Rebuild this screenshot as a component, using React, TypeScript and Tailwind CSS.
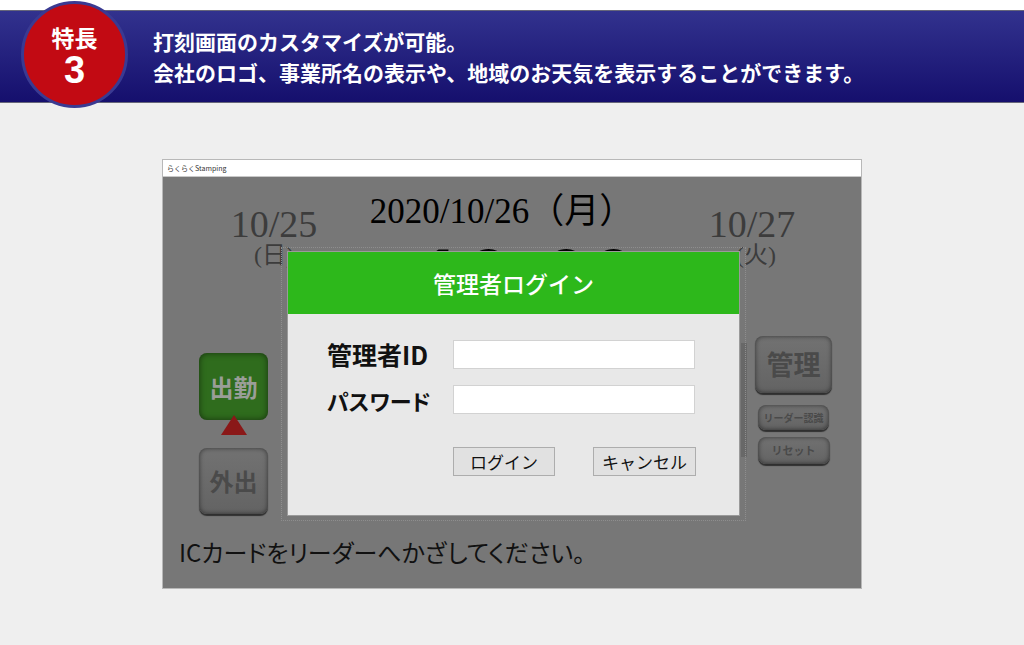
import React from "react";

function GreyButton({ className, children }: { className: string; children: React.ReactNode }) {
  return (
    <div
      className={
        "flex items-center justify-center rounded-[8px] bg-[linear-gradient(to_bottom,#727272,#636363)] shadow-[inset_0_0_5px_rgba(0,0,0,0.55),0_2px_1px_rgba(0,0,0,0.6)] text-[#4a4a4a] font-bold " +
        className
      }
    >
      {children}
    </div>
  );
}

export default function App() {
  return (
    <div className="relative w-[1024px] h-[645px] overflow-hidden bg-[#efefef] font-['Noto_Sans_CJK_JP',sans-serif]">
      <div className="h-[10px] bg-white" />
      <div className="h-[93px] border-y border-[#66667a] bg-[linear-gradient(to_bottom,#32328e,#150f6d)] flex flex-col justify-center pl-[153px] text-white font-bold text-[21px] leading-[31px]">
        <div>打刻画面のカスタマイズが可能。</div>
        <div>会社のロゴ、事業所名の表示や、地域のお天気を表示することができます。</div>
      </div>

      {/* badge */}
      <div className="absolute left-[21px] top-[1px] w-[107px] h-[107px] rounded-full bg-[#c20a13] border-[3px] border-[#3a3a92] flex flex-col items-center text-white font-bold">
        <div className="mt-[21px] text-[23px] leading-[24px]">特長</div>
        <div className="mt-[3px] text-[38px] leading-[36px] font-['Liberation_Sans',sans-serif]">3</div>
      </div>

      {/* window */}
      <div className="ml-[162px] mt-[56px] w-[700px] border border-[#b8b8b8] bg-white">
        <div className="h-[17px] border-b border-[#c8c8c8] flex items-center pl-[4px] text-[7px] text-[#333]">
          らくらくStamping
        </div>
        <div className="relative h-[411px] bg-[#777777] overflow-hidden">
          {/* date row */}
          <div className="flex items-start font-['Liberation_Serif','Noto_Sans_CJK_JP',serif]">
            <div className="ml-[68px] w-[86px] shrink-0 mt-[28px] flex flex-col items-center text-[#3c3c3c]">
              <div className="text-[38px] leading-none">10/25</div>
              <div className="text-[24px] leading-none">(日)</div>
            </div>
            <div className="ml-[45px] w-[280px] shrink-0 mt-[17px] flex flex-col items-center">
              <div className="text-[35px] leading-none text-black whitespace-nowrap">2020/10/26（月）</div>
              <div className="mt-[9px] pl-[56px] text-[76px] leading-none font-bold tracking-[5px] text-black whitespace-nowrap font-['Liberation_Sans',sans-serif]">
                10:00
              </div>
            </div>
            <div className="ml-[67px] w-[86px] shrink-0 mt-[28px] flex flex-col items-center text-[#3c3c3c]">
              <div className="text-[38px] leading-none">10/27</div>
              <div className="text-[24px] leading-none pl-[8px]">(火)</div>
            </div>
          </div>

          {/* buttons row */}
          <div className="flex justify-between items-start -mt-[8px] pl-[36px] pr-[29px]">
            <div className="mt-[47px] flex flex-col items-center w-[69px]">
              <div className="w-[69px] h-[67px] rounded-[8px] bg-[#2f6c1d] shadow-[inset_0_0_6px_rgba(0,0,0,0.55)] flex items-center justify-center text-[#9a9e98] text-[24px] font-bold">
                出勤
              </div>
              <svg className="-mt-[5px]" width="26" height="20" viewBox="0 0 26 20">
                <polygon points="13,0 26,20 0,20" fill="#8a1818" />
              </svg>
              <GreyButton className="mt-[13px] w-[69px] h-[66px] text-[24px]">外出</GreyButton>
            </div>
            <div className="mt-[30px] flex flex-col items-center w-[77px]">
              <GreyButton className="w-[77px] h-[57px] text-[27px]">管理</GreyButton>
              <GreyButton className="mt-[12px] w-[71px] h-[25px] text-[10px]">リーダー認識</GreyButton>
              <GreyButton className="mt-[7px] w-[72px] h-[27px] text-[11px]">リセット</GreyButton>
            </div>
          </div>

          {/* bottom text */}
          <div className="mt-[20px] pl-[16px] text-[24px] leading-[36px] text-[#111] [font-feature-settings:'palt']">
            ICカードをリーダーへかざしてください。
          </div>

          {/* scroll strip */}
          <div className="absolute left-[578px] top-[166px] w-[6px] h-[114px] bg-[#686868]" />
          {/* dotted frame */}
          <div className="absolute left-[118px] top-[70px] w-[465px] h-[274px] border border-dotted border-[#8e8e8e]" />

          {/* modal */}
          <div className="absolute left-[124px] top-[74px] w-[453px] h-[265px] bg-[#e8e8e8] border border-[#9a9a9a] flex flex-col">
            <div className="h-[62px] bg-[#2db81b] flex items-center justify-center text-white text-[23px] font-medium">
              管理者ログイン
            </div>
            <div className="pl-[39px] pt-[26px] flex flex-col">
              <div className="flex items-center h-[29px]">
                <div className="w-[126px] text-[25px] font-bold text-[#111] leading-none">管理者ID</div>
                <div className="w-[242px] h-[29px] bg-white border border-[#d2d2d2]" />
              </div>
              <div className="flex items-center h-[29px] mt-[16px]">
                <div className="w-[126px] text-[22px] font-bold text-[#111] leading-none [font-feature-settings:'palt']">パスワード</div>
                <div className="w-[242px] h-[29px] bg-white border border-[#d2d2d2]" />
              </div>
              <div className="flex mt-[33px] ml-[126px] gap-[38px]">
                <div className="w-[102px] h-[29px] bg-[#e1e1e1] border border-[#adadad] flex items-center justify-center text-[17px] text-[#111]">
                  ログイン
                </div>
                <div className="w-[103px] h-[29px] bg-[#e1e1e1] border border-[#adadad] flex items-center justify-center text-[17px] text-[#111]">
                  キャンセル
                </div>
              </div>
            </div>
          </div>
        </div>
      </div>
    </div>
  );
}
